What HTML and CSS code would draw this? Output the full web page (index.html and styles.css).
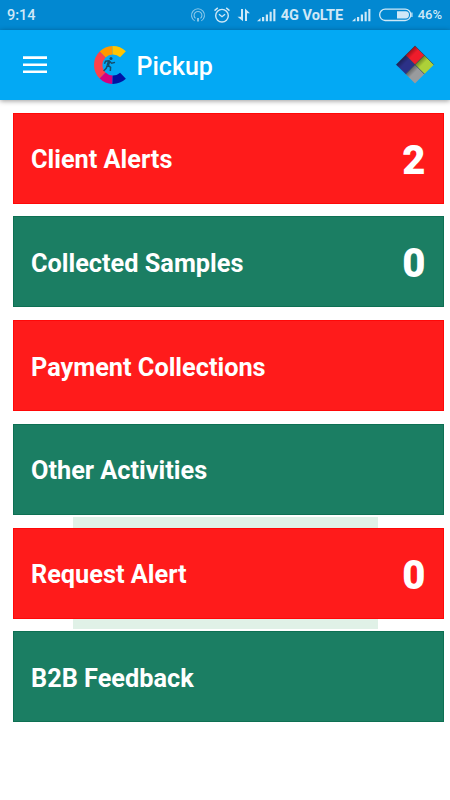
FILE: index.html
```html
<!DOCTYPE html>
<html lang="en">
<head>
<meta charset="utf-8">
<title>Pickup</title>
<link rel="stylesheet" href="styles.css">
</head>
<body>
<div class="status">
  <span class="time">9:14</span>
  <svg class="cast" width="16" height="16" viewBox="0 0 16 16"><g fill="none" stroke="currentColor" stroke-width="1.1"><path d="M4.7 13.9a6.5 6.5 0 1 1 6.6 0"/><path d="M5.5 11.4a3.9 3.9 0 1 1 5 0"/></g><path d="M8 11v3.5" stroke="currentColor" stroke-width="2"/></svg>
  <svg class="alarm" width="16" height="16" viewBox="0 0 16 16"><g fill="none" stroke="currentColor" stroke-width="1.4"><circle cx="8" cy="8.7" r="6.3"/><path d="M.5 3.6 3.8.9M12.2.9l3.3 2.7M5 7.2l3 2.5 3.1-2.5"/></g></svg>
  <svg class="data" width="14" height="14" viewBox="0 0 14 14"><path d="M4 1h2v12.3L.5 8.8h3.5zM8 13V.6l5 4.6h-3V13z" fill="currentColor"/></svg>
  <svg class="signal" width="19" height="14" viewBox="0 0 19 14"><path d="M0 13.2 3.5 10v3.2zM5 9h2.2v4.2H5zM8.8 6.5H11v6.7H8.8zM12.6 3.8h2.1v9.4h-2.1zM16.3 1h2.1v12.2h-2.1z" fill="currentColor"/></svg>
  <span class="network">4G VoLTE</span>
  <svg class="signal" width="19" height="14" viewBox="0 0 19 14"><path d="M0 13.2 3.5 10v3.2zM5 9h2.2v4.2H5zM8.8 6.5H11v6.7H8.8zM12.6 3.8h2.1v9.4h-2.1zM16.3 1h2.1v12.2h-2.1z" fill="currentColor"/></svg>
  <svg class="battery" width="34" height="14" viewBox="0 0 34 14"><rect x=".7" y="1.1" width="31" height="11.4" rx="5.5" fill="none" stroke="currentColor" stroke-width="1.3"/><path d="M18 3.2h8.8q3.2 0 3.2 3.6t-3.2 3.6H18z" fill="currentColor"/><path d="M32.9 4.5v4.6" stroke="currentColor" stroke-width="1.2"/></svg>
  <span class="percent">46%</span>
</div>
<header class="appbar">
  <svg class="menu" width="24" height="18" viewBox="0 0 24 18"><path d="M0 1.6h24M0 8.8h24M0 15.8h24" stroke="#fff" stroke-width="2.6"/></svg>
  <svg class="logo" width="34" height="40" viewBox="0 0 34 40">
    <g fill="none" stroke-width="8.4">
      <path d="M9.57 9.47A14.8 14.8 0 0 1 19.5 5.2" stroke="#ff9800"/>
      <path d="M19.5 5.2A14.8 14.8 0 0 1 30 9.2" stroke="#ffc400"/>
      <path d="M9.6 9.5A14.8 14.8 0 0 0 9.6 30.5" stroke="#ff4149"/>
      <path d="M9.6 30.5A14.8 14.8 0 0 0 19.5 34.8" stroke="#d6007f"/>
      <path d="M19.5 34.8A14.8 14.8 0 0 0 30 30.8" stroke="#0014a3"/>
    </g>
    <circle cx="18" cy="13.4" r="1.5" fill="#174b68"/>
    <path d="M11.5 18.8 12.6 16.2 16 15.8 18.6 18.3 22 17.4" fill="none" stroke="#174b68" stroke-width="1.4"/>
    <path d="M16.2 16 14.8 20.4" stroke="#174b68" stroke-width="2.6"/>
    <path d="M14.8 20 17.6 22.3 17.3 26M14.4 20.4 13.2 23.3 10.6 26" fill="none" stroke="#174b68" stroke-width="1.5"/>
  </svg>
  <h1 class="title">Pickup</h1>
  <svg class="brand" width="40" height="40" viewBox="0 0 40 40">
    <defs>
      <linearGradient id="shade" x2="1" y2="0"><stop stop-color="#000" stop-opacity=".36"/><stop offset=".4" stop-color="#000" stop-opacity="0"/></linearGradient>
    </defs>
    <g transform="translate(20 .9) rotate(45)">
      <rect width="13.3" height="13.3" fill="#ef1c2b"/>
      <rect x="13.3" width="13.3" height="13.3" fill="#add038"/>
      <rect y="13.3" width="13.3" height="13.3" fill="#2c3187"/>
      <rect x="13.3" y="13.3" width="13.3" height="13.3" fill="#999b9d"/>
      <g fill="url(#shade)"><rect width="13.3" height="13.3"/><rect x="13.3" width="13.3" height="13.3"/><rect y="13.3" width="13.3" height="13.3"/><rect x="13.3" y="13.3" width="13.3" height="13.3"/></g>
      <path d="M0 13.3h26.6M13.3 0v26.6M0 0h26.6M0 0v26.6" stroke="#303446" stroke-opacity=".65" stroke-width=".9"/>
    </g>
  </svg>
</header>
<main class="list">
  <div class="backdrop"></div>
  <section class="card red"><span>Client Alerts</span><b>2</b></section>
  <section class="card green"><span>Collected Samples</span><b>0</b></section>
  <section class="card red"><span>Payment Collections</span></section>
  <section class="card green"><span>Other Activities</span></section>
  <section class="card red"><span>Request Alert</span><b>0</b></section>
  <section class="card green"><span>B2B Feedback</span></section>
</main>
</body>
</html>
```
FILE: styles.css
```css
* { box-sizing: border-box; }
body {
  margin: 0;
  height: 800px;
  overflow: hidden;
  background: #fff;
  font-family: Roboto, sans-serif;
}
svg { display: block; flex: none; }
.status {
  display: flex;
  align-items: center;
  height: 30px;
  padding: 0 8px 0 7px;
  background: #0288d1;
  color: #cfe8f7;
  white-space: nowrap;
}
.time { width: 183px; font-size: 14.5px; font-weight: 500; }
.cast { opacity: .65; }
.alarm { margin-left: 8px; }
.data { margin-left: 7px; }
.signal { margin-left: 6px; }
.network { width: 65px; margin-left: 5px; font-size: 14.5px; font-weight: 700; }
.battery { margin-left: 8px; }
.percent { margin: -1px 0 0 5px; font-size: 13px; font-weight: 500; }
.appbar {
  display: flex;
  align-items: center;
  height: 70px;
  padding: 0 15px 0 23px;
  background: #03a9f4;
  box-shadow: 0 1px 5px rgba(0, 0, 0, .4);
}
.logo { margin-left: 46px; }
.title {
  margin: 4px auto 0 9.5px;
  color: #fff;
  font-size: 25px;
  font-weight: 500;
  line-height: 30px;
}
.list {
  position: relative;
  display: flex;
  flex-direction: column;
  gap: 12.75px;
  padding: 12.6px 6.5px 0 12.7px;
}
.backdrop {
  position: absolute;
  z-index: -1;
  top: 417px;
  left: 73px;
  width: 305px;
  height: 112px;
  background: #e0f1e7;
}
.card {
  display: flex;
  align-items: center;
  justify-content: space-between;
  height: 91px;
  padding: 3px 17px 0 17.3px;
  color: #fff;
  font-size: 25.3px;
  font-weight: 700;
}
.card b { font-size: 40px; line-height: 48px; padding-top: 2px; }
.red { background: #ff1b1b; border: 1px solid #ff0808; }
.green { background: #1b7e63; border: 1px solid #0e7053; }
```
